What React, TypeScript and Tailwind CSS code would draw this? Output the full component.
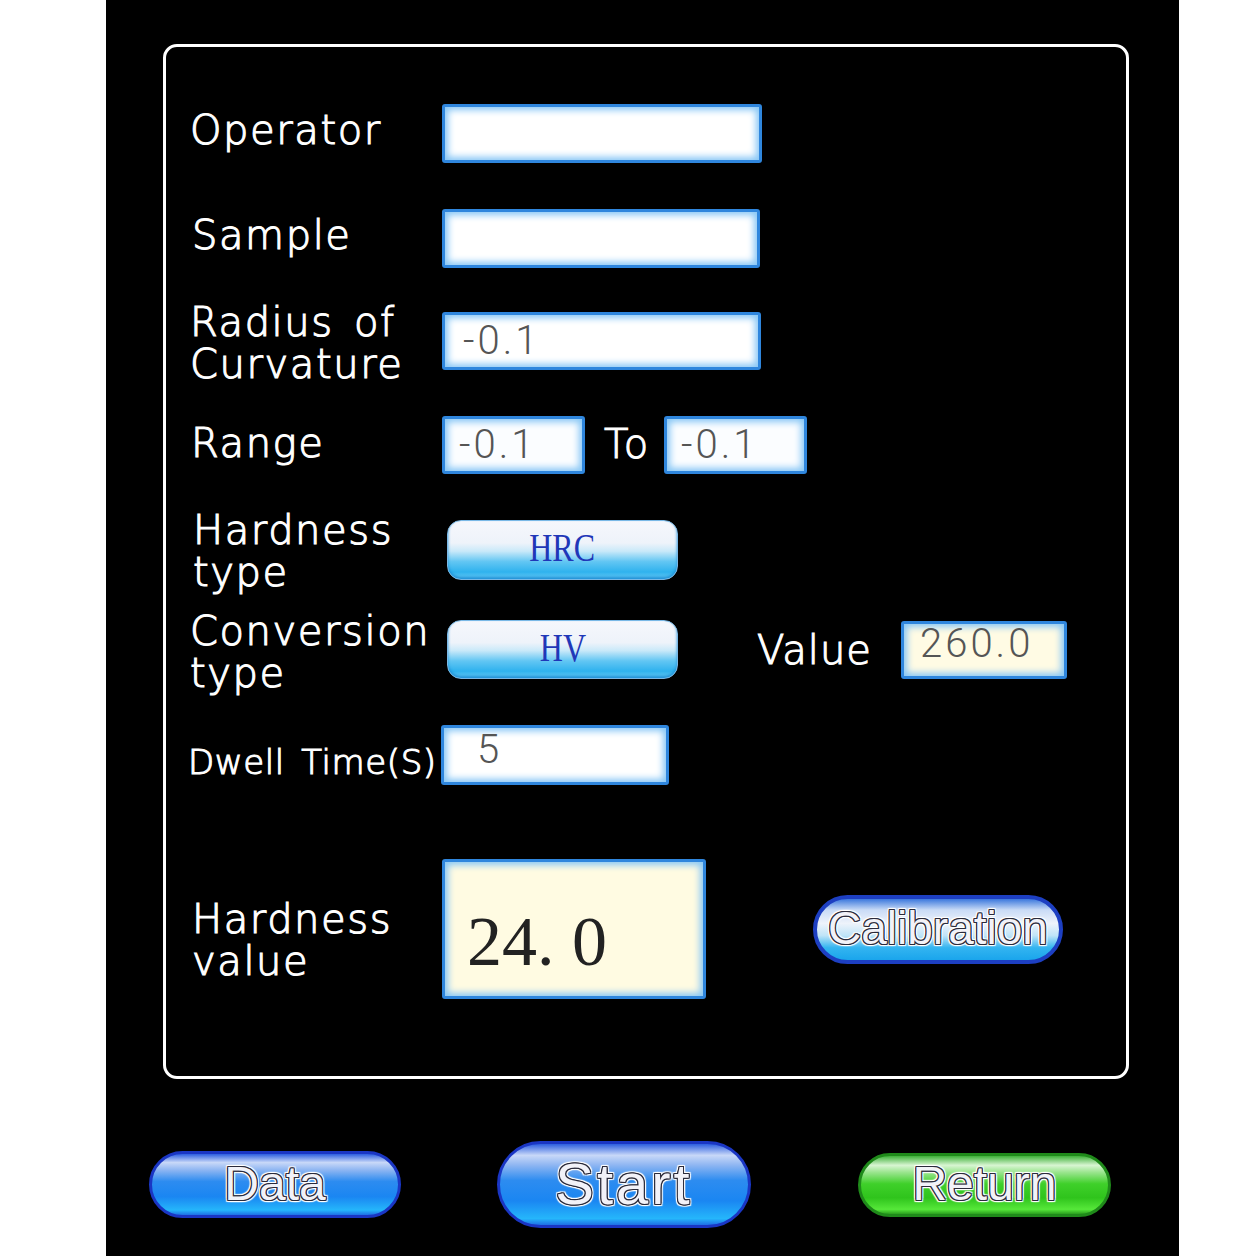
import React from "react";

const fontLbl =
  "font-extralight font-['DejaVu_Sans',sans-serif] [-webkit-text-stroke:1.1px_#ffffff]";

const labelCls =
  "w-[252px] shrink-0 text-white text-[40px] leading-[42px] tracking-[1.6px] [word-spacing:6px] whitespace-nowrap " +
  fontLbl;

const inputCls =
  "border-[3px] border-[#2f86dd] rounded-[3px] shadow-[inset_0_0_7px_3px_#86c6f6] flex items-center";

const valCls =
  "font-['Roboto',sans-serif] font-light text-[40px] tracking-[3px] text-[#555] leading-none";

const lightBtn =
  "rounded-[14px] border border-[#7ab8e6] bg-[linear-gradient(to_bottom,#f6f7fc_0%,#eef3fa_38%,#c9e9f9_52%,#62c6f3_70%,#2fb2ee_88%,#6ccdf5_100%)] shadow-[inset_0_-2px_3px_#1d8fd6] flex items-center justify-center";

const glossText =
  "font-['Liberation_Sans',Arial,sans-serif] text-[#f2f2f8] [text-shadow:1px_0_0_#2a2a3a,-1px_0_0_#2a2a3a,0_1px_0_#2a2a3a,0_-1px_0_#2a2a3a,1px_1px_0_#2a2a3a,-1px_-1px_0_#2a2a3a,1px_-1px_0_#2a2a3a,-1px_1px_0_#2a2a3a,2px_0_1px_#ffffff,-2px_0_1px_#ffffff,0_2px_1px_#ffffff,0_-2px_1px_#ffffff,2px_2px_1px_#ffffff,-2px_-2px_1px_#ffffff,2px_-2px_1px_#ffffff,-2px_2px_1px_#ffffff]";

export default function App() {
  return (
    <div className="w-[1256px] h-[1256px] bg-white flex">
      <div className="ml-[106px] w-[1073px] h-[1256px] bg-black flex flex-col">
        {/* Panel */}
        <div className="ml-[57px] mt-[44px] w-[966px] h-[1035px] border-[3px] border-white rounded-[14px] flex flex-col pl-[24px]">
          {/* Operator */}
          <div className="mt-[57px] h-[59px] flex items-center">
            <div className={labelCls + " pb-[8px]"}>Operator</div>
            <div className={inputCls + " bg-white w-[320px] h-[59px]"} />
          </div>
          {/* Sample */}
          <div className="mt-[46px] h-[59px] flex items-center">
            <div className={labelCls + " pb-[8px] pl-[2px]"}>Sample</div>
            <div className={inputCls + " bg-white w-[318px] h-[59px]"} />
          </div>
          {/* Radius */}
          <div className="mt-[44px] h-[58px] flex items-center">
            <div className={labelCls + " pt-[4px]"}>
              Radius of
              <br />
              Curvature
            </div>
            <div className={inputCls + " bg-white w-[319px] h-[58px] pl-[18px]"}>
              <span className={valCls}>-0.1</span>
            </div>
          </div>
          {/* Range */}
          <div className="mt-[46px] h-[58px] flex items-center">
            <div className={labelCls + " pb-[4px] pl-[1px]"}>Range</div>
            <div className={inputCls + " bg-[#fbfdff] w-[143px] h-[58px] pl-[14px]"}>
              <span className={valCls}>-0.1</span>
            </div>
            <div className={"ml-[19px] w-[60px] text-white text-[40px] leading-[42px] tracking-[2px] pb-[2px] " + fontLbl}>
              To
            </div>
            <div className={inputCls + " bg-[#fbfdff] w-[143px] h-[58px] pl-[14px]"}>
              <span className={valCls}>-0.1</span>
            </div>
          </div>
          {/* Hardness type */}
          <div className="mt-[46px] h-[60px] flex items-center">
            <div className={labelCls + " pl-[3px] pt-[2px]"}>
              Hardness
              <br />
              type
            </div>
            <div className={lightBtn + " ml-[5px] w-[231px] h-[60px]"}>
              <span className="font-['Liberation_Serif',serif] text-[40px] leading-none text-[#1f37b8] scale-x-80 inline-block pb-[4px]">
                HRC
              </span>
            </div>
          </div>
          {/* Conversion type */}
          <div className="mt-[40px] h-[59px] flex items-center">
            <div className={labelCls + " pt-[4px]"}>
              Conversion
              <br />
              type
            </div>
            <div className={lightBtn + " ml-[5px] w-[231px] h-[59px]"}>
              <span className="font-['Liberation_Serif',serif] text-[40px] leading-none text-[#1f37b8] scale-x-80 inline-block pb-[4px]">
                HV
              </span>
            </div>
            <div className={"ml-[79px] w-[144px] text-white text-[40px] leading-[42px] tracking-[1px] " + fontLbl}>
              Value
            </div>
            <div className={inputCls + " w-[166px] h-[58px] pl-[16px] pb-[12px] bg-[#fffbe4]"}>
              <span className={valCls}>260.0</span>
            </div>
          </div>
          {/* Dwell */}
          <div className="mt-[46px] h-[60px] flex items-center">
            <div className={"w-[253px] shrink-0 -ml-[2px] text-white text-[34px] leading-[40px] tracking-[0.6px] [word-spacing:5px] whitespace-nowrap pt-[14px] " + fontLbl}>
              Dwell Time(S)
            </div>
            <div className={inputCls + " bg-white w-[228px] h-[60px] pl-[33px] pb-[10px]"}>
              <span className={valCls}>5</span>
            </div>
          </div>
          {/* Hardness value */}
          <div className="mt-[74px] h-[140px] flex items-center">
            <div className={labelCls + " pl-[2px] pt-[22px]"}>
              Hardness
              <br />
              value
            </div>
            <div className={inputCls + " w-[264px] h-[140px] pl-[22px] pt-[26px] bg-[#fffbe2]"}>
              <span className="font-['Liberation_Serif',serif] text-[70px] leading-none text-[#222] whitespace-pre">
                24. 0
              </span>
            </div>
            <div className="ml-[107px] w-[250px] h-[69px] rounded-full border-[4px] border-[#1d3fc2] bg-[linear-gradient(to_bottom,#3b78dd_0%,#c9dbf6_18%,#eef3fb_40%,#bfe4f8_60%,#33b4f0_80%,#1aa5ec_100%)] flex items-center justify-center">
              <span className={glossText + " text-[46px] leading-none pb-[2px]"}>Calibration</span>
            </div>
          </div>
        </div>

        {/* Bottom buttons */}
        <div className="mt-[62px] h-[87px] flex items-center">
          <div className="ml-[43px] w-[252px] h-[67px] rounded-full border-[3px] border-[#1a36c4] bg-[linear-gradient(to_bottom,#2d5fe0_0%,#c8d8f8_14%,#8fb6f2_26%,#2d8cf0_45%,#1a86f2_70%,#25b6fb_92%,#1f6fe6_100%)] flex items-center justify-center">
            <span className={glossText + " text-[48px] leading-none pb-[2px]"}>Data</span>
          </div>
          <div className="ml-[96px] w-[254px] h-[87px] rounded-full border-[3px] border-[#1a36c4] bg-[linear-gradient(to_bottom,#2d5fe0_0%,#c8d8f8_14%,#8fb6f2_26%,#2d8cf0_45%,#1a86f2_70%,#25b6fb_92%,#1f6fe6_100%)] flex items-center justify-center">
            <span className={glossText + " text-[58px] leading-none tracking-[3px] pb-[2px]"}>Start</span>
          </div>
          <div className="ml-[107px] w-[253px] h-[64px] rounded-full border-[3px] border-[#1f8a1a] bg-[linear-gradient(to_bottom,#3fb13a_0%,#d8f5d2_16%,#9be58f_28%,#3fd02a_48%,#2fc41c_72%,#56e83a_92%,#2a9f1e_100%)] flex items-center justify-center">
            <span className={glossText + " text-[48px] leading-none pb-[2px]"}>Return</span>
          </div>
        </div>
      </div>
    </div>
  );
}
